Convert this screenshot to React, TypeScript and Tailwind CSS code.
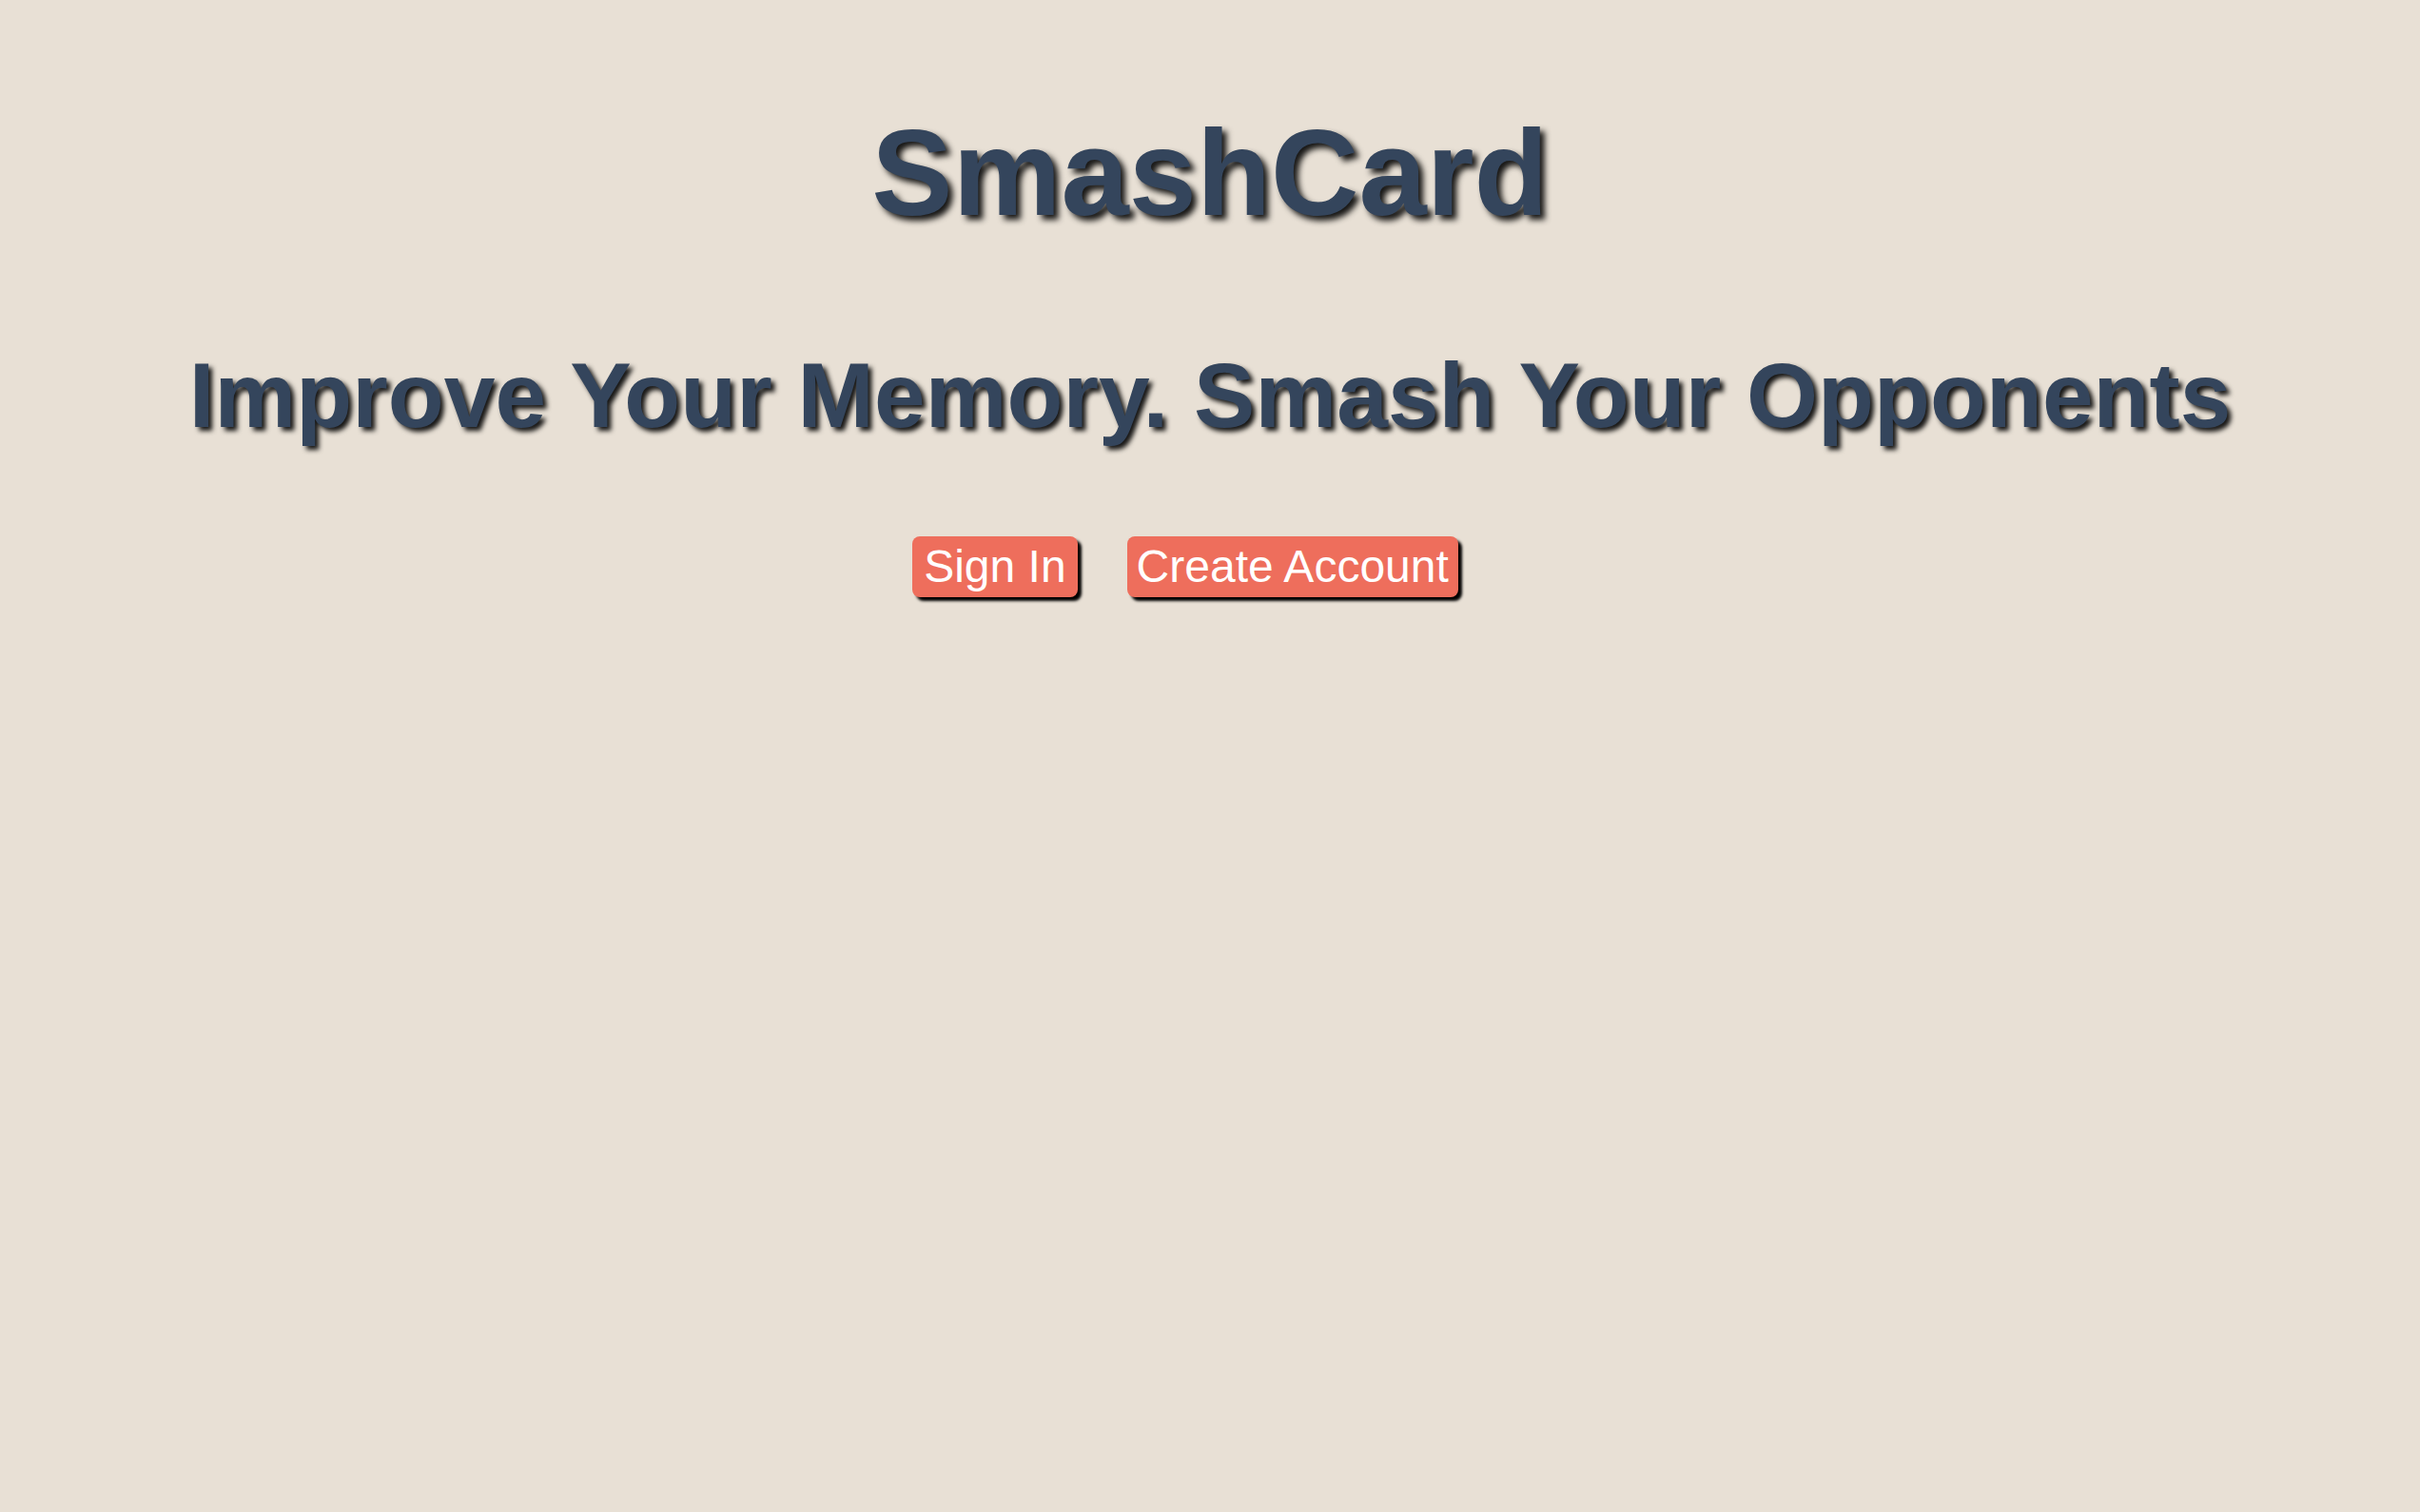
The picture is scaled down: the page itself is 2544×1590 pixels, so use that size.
import React from "react";

export default function App() {
  return (
    <div className="min-h-screen w-full bg-[#e8e0d5] font-['Liberation_Sans',Arial,sans-serif] flex flex-col items-center">
      <h1 className="mt-[118px] text-[128px] leading-none font-bold text-[#34455c] [text-shadow:5px_5px_6px_rgba(0,0,0,0.9)]">
        SmashCard
      </h1>
      <h2 className="mt-[122px] text-[96.5px] leading-none font-bold text-[#34455c] [text-shadow:4px_4px_5px_rgba(0,0,0,0.9)]">
        Improve Your Memory. Smash Your Opponents
      </h2>
      <div className="mt-[99px] flex items-center">
        <button className="mr-[52px] bg-[#ee6e5c] text-white text-5xl leading-none px-3 py-2 rounded-lg shadow-[4px_4px_3px_#000]">
          Sign In
        </button>
        <button className="mr-[52px] bg-[#ee6e5c] text-white text-5xl leading-none px-2.5 py-2 rounded-lg shadow-[4px_4px_3px_#000]">
          Create Account
        </button>
      </div>
    </div>
  );
}
